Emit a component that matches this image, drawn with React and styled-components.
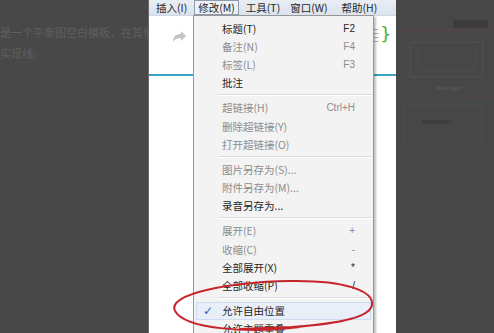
import React from 'react';
import styled, { createGlobalStyle } from 'styled-components';

const Global = createGlobalStyle`
  html, body { margin: 0; padding: 0; background: #484848; }
  body { width: 494px; height: 333px; overflow: hidden; }
`;

const cjk = `"Noto Sans CJK SC", "Liberation Sans", sans-serif`;

const Page = styled.div`
  position: relative;
  display: flex;
  width: 494px;
  height: 333px;
  overflow: hidden;
  font-family: ${cjk};
`;

const LeftPane = styled.div`
  width: 148px;
  flex: none;
  background: #484848;
  border-right: 1px solid #6a6a6a;
  padding-top: 22px;
  color: #5f5f5f;
  font-size: 11px;
  line-height: 21px;
  white-space: nowrap;
  overflow: hidden;
`;

const Center = styled.div`
  position: relative;
  width: 247px;
  flex: none;
  background: #fff;
  display: flex;
  flex-direction: column;
`;

const MenuBar = styled.div`
  height: 15px;
  flex: none;
  display: flex;
  align-items: center;
  padding-left: 2px;
  background: linear-gradient(#e9eef5, #dbe3ee);
  border-bottom: 1px solid #cdd6e2;
  font-size: 10.5px;
  color: #1e1e1e;
  white-space: nowrap;
  overflow: hidden;
`;

const BarItem = styled.div`
  height: 13px;
  line-height: 13px;
  padding: 0 ${p => p.$pad || 4}px;
  border: 1px solid ${p => (p.$open ? '#8e9aab' : 'transparent')};
  background: ${p => (p.$open ? '#eef1f5' : 'transparent')};
  margin-right: ${p => p.$gap || 0}px;
`;

const Canvas = styled.div`
  position: relative;
  flex: 1;
`;

const Redo = styled.svg`
  position: absolute;
  left: 22px;
  top: 13px;
`;

const Brace = styled.div`
  position: absolute;
  left: 231px;
  top: 8px;
  color: #4caf3a;
  font-family: "DejaVu Sans", sans-serif;
  font-size: 18px;
  line-height: 20px;
`;

const Lines = styled.div`
  position: absolute;
  left: 225px;
  top: 13px;
  display: flex;
  flex-direction: column;
  gap: 3px;
  span { display: block; width: 5px; height: 1px; background: #b8b8b8; }
`;

const Connector = styled.div`
  position: absolute;
  left: 0;
  right: 0;
  top: 58px;
  height: 2px;
  background: #3aa2c2;
`;

const Menu = styled.div`
  position: absolute;
  left: 44px;
  top: 15px;
  width: 179px;
  padding: 3px 0 0;
  background: #f3f3f3;
  border: 1px solid #979797;
  box-shadow: 2px 2px 2px rgba(0, 0, 0, 0.25);
  font-size: 10.5px;
`;

const Row = styled.div`
  position: relative;
  height: 18.2px;
  display: flex;
  align-items: center;
  margin: 0 2px;
  padding: 0 16px 0 26px;
  box-sizing: border-box;
  color: ${p => (p.$off ? '#8c8c8c' : '#262626')};
  background: ${p => (p.$hot ? '#e9eff9' : 'transparent')};
  box-shadow: ${p => (p.$hot ? 'inset 0 0 0 1px #cddcf1' : 'none')};
`;

const Label = styled.span`
  flex: 1;
  white-space: nowrap;
`;

const Key = styled.span`
  font-family: "Liberation Sans", sans-serif;
  font-size: 10px;
`;

const Check = styled.span`
  position: absolute;
  left: 7px;
  top: 2px;
  color: #2a5fb8;
  font-family: "DejaVu Sans", sans-serif;
  font-size: 12px;
`;

const Sep = styled.div`
  height: 7px;
  display: flex;
  align-items: center;
  padding-left: 24px;
  &::after {
    content: '';
    flex: 1;
    height: 1px;
    background: #dcdcdc;
    border-bottom: 1px solid #fff;
  }
`;

const RightPane = styled.div`
  flex: 1;
  background: #474747;
`;

const Circle = styled.svg`
  position: absolute;
  left: 0;
  top: 0;
  pointer-events: none;
`;

const groups = [
  [
    ['标题(T)', 'F2'],
    ['备注(N)', 'F4', true],
    ['标签(L)', 'F3', true],
    ['批注', ''],
  ],
  [
    ['超链接(H)', 'Ctrl+H', true],
    ['删除超链接(Y)', '', true],
    ['打开超链接(O)', '', true],
  ],
  [
    ['图片另存为(S)...', '', true],
    ['附件另存为(M)...', '', true],
    ['录音另存为...', ''],
  ],
  [
    ['展开(E)', '+', true],
    ['收缩(C)', '-', true],
    ['全部展开(X)', '*'],
    ['全部收缩(P)', '/'],
  ],
];

export default function App() {
  return (
    <Page>
      <Global />
      <LeftPane>
        <div>是一个平衡图空白模板，在其他</div>
        <div>实现线。</div>
      </LeftPane>
      <Center>
        <MenuBar>
          <BarItem $gap={2}>插入(I)</BarItem>
          <BarItem $open $pad={3} $gap={2}>修改(M)</BarItem>
          <BarItem $gap={0}>工具(T)</BarItem>
          <BarItem $gap={4}>窗口(W)</BarItem>
          <BarItem>帮助(H)</BarItem>
        </MenuBar>
        <Canvas>
          <Redo width="16" height="14" viewBox="0 0 16 14">
            <path d="M2 13 C2 7 5 5 10 5 L10 2 L15 7 L10 12 L10 9 C6 9 4 10 2 13 Z" fill="#c4c4c4" />
          </Redo>
          <Lines><span /><span /><span /><span /></Lines>
          <Brace>{'}'}</Brace>
          <Connector />
        </Canvas>
        <Menu>
          {groups.map((g, gi) => (
            <React.Fragment key={gi}>
              {g.map(([label, key, off]) => (
                <Row key={label} $off={off}>
                  <Label>{label}</Label>
                  <Key>{key}</Key>
                </Row>
              ))}
              <Sep />
            </React.Fragment>
          ))}
          <Row $hot>
            <Check>✓</Check>
            <Label>允许自由位置</Label>
          </Row>
          <Row>
            <Label>允许主题重叠</Label>
          </Row>
        </Menu>
      </Center>
      <RightPane>
        <svg width="99" height="333" viewBox="0 0 99 333">
          <rect x="57" y="20" width="35" height="8" fill="#3c3c3c" />
          <path d="M0 31 L99 29" stroke="#5a4444" strokeWidth="1" />
          <rect x="14" y="42" width="73" height="35" fill="none" stroke="#525252" />
          <rect x="22" y="48" width="57" height="22" fill="none" stroke="#4f4f4f" />
          <text x="39" y="90" fontSize="6" fill="#5e5e5e" fontFamily="Liberation Sans">Main topic</text>
          <path d="M0 100 L99 97" stroke="#554545" strokeWidth="1" />
          <rect x="8" y="106" width="78" height="38" fill="none" stroke="#4f4f4f" />
          <rect x="26" y="120" width="30" height="4" fill="#3f3f3f" />
        </svg>
      </RightPane>
      <Circle width="494" height="333" viewBox="0 0 494 333">
        <path
          d="M300 327 C250 333 186 330 175 311 C166 294 230 282 290 281 C345 280 374 291 372 305 C370 318 336 324 292 327 L240 329"
          fill="none"
          stroke="#c7252c"
          strokeWidth="2"
        />
      </Circle>
    </Page>
  );
}
